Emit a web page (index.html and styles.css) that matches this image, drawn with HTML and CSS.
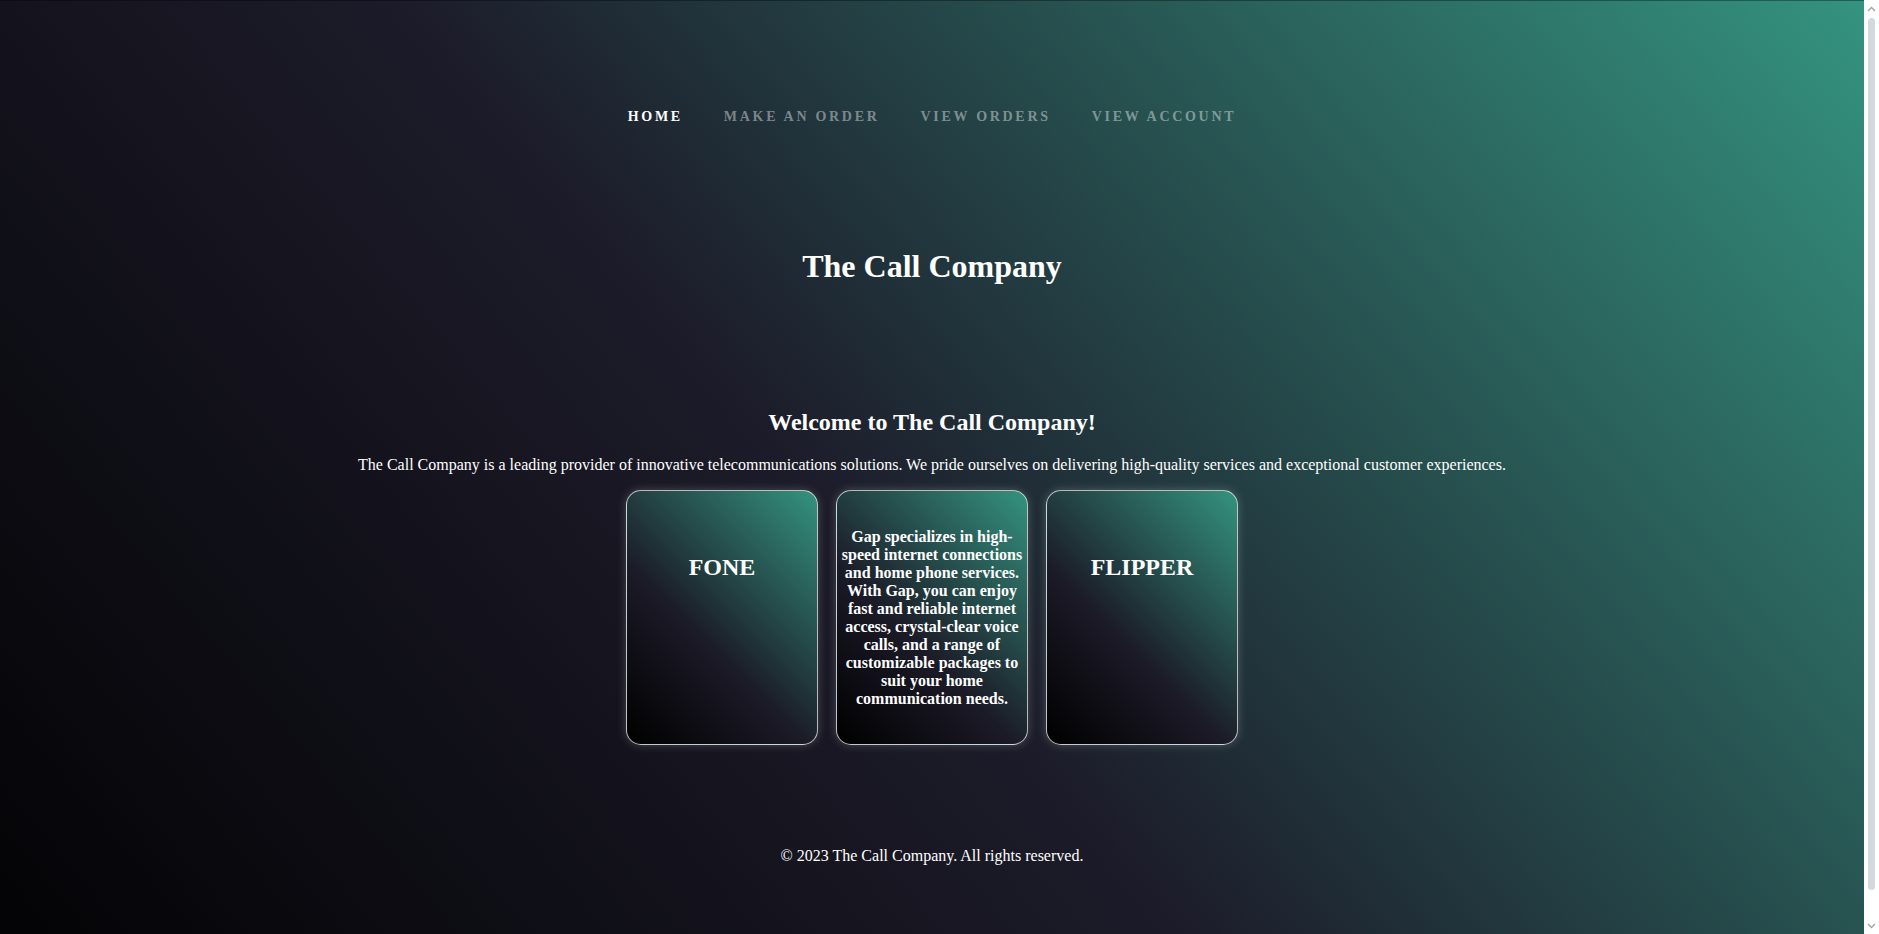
FILE: index.html
```html
<!DOCTYPE html>
<html lang="en">
<head>
<meta charset="utf-8">
<title>The Call Company</title>
<link rel="stylesheet" href="styles.css">
</head>
<body>
<div class="page">
  <header class="site-header">
    <nav class="nav">
      <a class="nav-link active" href="#">Home</a>
      <a class="nav-link" href="#">Make an Order</a>
      <a class="nav-link" href="#">View Orders</a>
      <a class="nav-link" href="#">View Account</a>
    </nav>
    <h1 class="site-title">The Call Company</h1>
  </header>
  <main class="main">
    <section class="intro">
      <h2 class="intro-title">Welcome to The Call Company!</h2>
      <p class="intro-text">The Call Company is a leading provider of innovative telecommunications solutions. We pride ourselves on delivering high-quality services and exceptional customer experiences.</p>
      <div class="cards">
        <div class="card">
          <h2 class="card-title">FONE</h2>
        </div>
        <div class="card card-back">
          <p class="card-text">Gap specializes in high-speed internet connections and home phone services. With Gap, you can enjoy fast and reliable internet access, crystal-clear voice calls, and a range of customizable packages to suit your home communication needs.</p>
        </div>
        <div class="card">
          <h2 class="card-title">FLIPPER</h2>
        </div>
      </div>
    </section>
  </main>
  <footer class="footer">
    <p class="footer-text">&copy; 2023 The Call Company. All rights reserved.</p>
  </footer>
</div>
<div class="scrollbar" aria-hidden="true">
  <div class="scroll-btn">
    <svg width="9" height="6" viewBox="0 0 9 6"><path d="M1 5 L4.5 1.5 L8 5" fill="none" stroke="#a3a3a3" stroke-width="1.4"/></svg>
  </div>
  <div class="scroll-track">
    <div class="scroll-thumb"></div>
  </div>
  <div class="scroll-btn">
    <svg width="9" height="6" viewBox="0 0 9 6"><path d="M1 1 L4.5 4.5 L8 1" fill="none" stroke="#a3a3a3" stroke-width="1.4"/></svg>
  </div>
</div>
</body>
</html>
```
FILE: styles.css
```css
html, body {
  margin: 0;
  padding: 0;
}

body {
  font-family: "Liberation Serif", "Times New Roman", serif;
  color: #ffffff;
  background: #0c0c12;
  display: flex;
  align-items: flex-start;
}

.page {
  flex: 1;
  min-width: 0;
  min-height: 964px;
  background: linear-gradient(50deg, #030305 0%, #1c1b29 45%, #34937f 100%);
  box-shadow: inset 0 1px 0 rgba(0, 0, 0, 0.35);
  display: flex;
  flex-direction: column;
  align-items: center;
}

.scrollbar {
  flex: none;
  width: 15px;
  height: 934px;
  background: #ffffff;
  display: flex;
  flex-direction: column;
}

.scroll-btn {
  height: 17px;
  display: flex;
  align-items: center;
  justify-content: center;
}

.scroll-track {
  flex: 1;
  padding: 1px 4px 0 4px;
}

.scroll-thumb {
  height: 872px;
  background: #d3d9df;
  border-radius: 4px;
}

.site-header {
  display: flex;
  flex-direction: column;
  align-items: center;
  padding-top: 109px;
}

.nav {
  display: flex;
  gap: 41px;
  line-height: 16px;
}

.nav-link {
  font-size: 14px;
  font-weight: bold;
  text-transform: uppercase;
  letter-spacing: 2.7px;
  color: rgba(255, 255, 255, 0.42);
  text-decoration: none;
}

.nav-link.active {
  color: #ffffff;
}

.site-title {
  margin: 123px 0 0;
  font-size: 32px;
  font-weight: bold;
}

.main {
  display: flex;
  flex-direction: column;
  align-items: center;
}

.intro {
  display: flex;
  flex-direction: column;
  align-items: center;
  text-align: center;
}

.intro-title {
  margin: 124px 0 20px;
  font-size: 24px;
  font-weight: bold;
}

.intro-text {
  margin: 0 0 16px;
  font-size: 16px;
}

.cards {
  display: flex;
  gap: 18px;
}

.card {
  box-sizing: border-box;
  width: 192px;
  height: 255px;
  border: 1px solid rgba(255, 255, 255, 0.72);
  border-radius: 15px;
  background: linear-gradient(45deg, #000000 0%, #1b1a27 40%, #34937f 100%);
  box-shadow: 0 0 10px rgba(255, 255, 255, 0.22);
  padding-top: 63px;
  text-align: center;
}

.card-title {
  margin: 0;
  font-size: 24px;
  font-weight: bold;
}

.card-back {
  padding-top: 0;
  display: flex;
  align-items: center;
  justify-content: center;
}

.card-text {
  margin: 0;
  font-size: 16px;
  font-weight: bold;
}

.footer {
  margin-top: 102px;
  padding-bottom: 99px;
  text-align: center;
}

.footer-text {
  margin: 0;
  font-size: 16px;
}
```
